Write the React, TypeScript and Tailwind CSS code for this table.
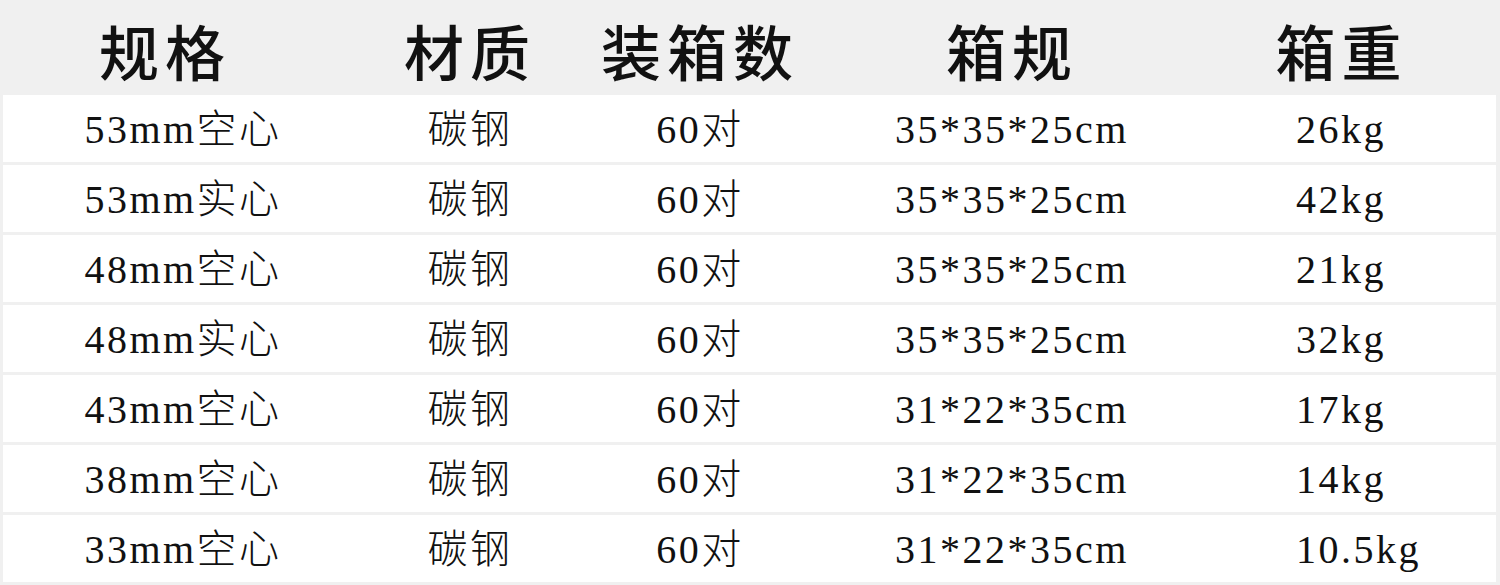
const ROWS = [
  { spec: '53mm空心', material: '碳钢', qty: '60对', box: '35*35*25cm', weight: '26kg' },
  { spec: '53mm实心', material: '碳钢', qty: '60对', box: '35*35*25cm', weight: '42kg' },
  { spec: '48mm空心', material: '碳钢', qty: '60对', box: '35*35*25cm', weight: '21kg' },
  { spec: '48mm实心', material: '碳钢', qty: '60对', box: '35*35*25cm', weight: '32kg' },
  { spec: '43mm空心', material: '碳钢', qty: '60对', box: '31*22*35cm', weight: '17kg' },
  { spec: '38mm空心', material: '碳钢', qty: '60对', box: '31*22*35cm', weight: '14kg' },
  { spec: '33mm空心', material: '碳钢', qty: '60对', box: '31*22*35cm', weight: '10.5kg' },
]

const GRID = 'grid grid-cols-[360px_214px_246px_378px_1fr]'

export default function App() {
  return (
    <div
      className="w-[1500px] h-[585px] overflow-hidden bg-[#f0f0f0] text-[#111]"
      style={{ fontFamily: '"Liberation Serif", "Noto Sans CJK SC", serif' }}
    >
      {/* Header */}
      <div className={`${GRID} h-[95px] pl-[3px] pr-[4px] items-center pt-[16px] text-[60px] font-medium tracking-[6px] leading-none`}>
        <div className="text-center pr-[36px]">规格</div>
        <div className="text-center">材质</div>
        <div className="text-center">装箱数</div>
        <div className="text-center">箱规</div>
        <div className="text-center pr-[14px]">箱重</div>
      </div>

      {/* Rows */}
      <div className="flex flex-col gap-[3px] pl-[3px] pr-[4px]">
        {ROWS.map((r, i) => (
          <div
            key={i}
            className={`${GRID} h-[67px] bg-white items-center pt-[2px] text-[40px] font-light tracking-[2.5px] leading-none`}
          >
            <div className="text-center">{r.spec}</div>
            <div className="text-center">{r.material}</div>
            <div className="text-center">{r.qty}</div>
            <div className="text-center">{r.box}</div>
            <div className="text-left pl-[95px]">{r.weight}</div>
          </div>
        ))}
      </div>
    </div>
  )
}
